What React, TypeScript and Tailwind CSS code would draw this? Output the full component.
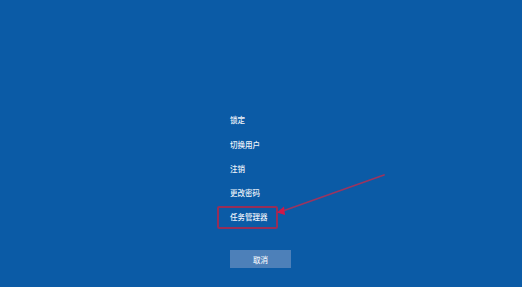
const items = ["锁定", "切换用户", "注销", "更改密码"];

const font = { fontFamily: '"Noto Sans CJK SC", "Noto Sans", sans-serif' };

export default function App() {
    return (
        <div
            className="relative h-[287px] w-[522px] overflow-hidden bg-[#0b5ba6] pl-[230px] pt-[108px] text-[#eef3fa]"
            style={font}
        >
            <div className="flex flex-col">
                {items.map((label) => (
                    <div key={label} className="flex h-[24.25px] items-center text-[7.5px] font-medium leading-none">
                        {label}
                    </div>
                ))}
                {/* highlighted entry */}
                <div className="relative flex h-[24.25px] items-center text-[7.5px] font-medium leading-none">
                    任务管理器
                    <div className="absolute -left-[13px] top-[1px] h-[23px] w-[61px] rounded-[2px] border-2 border-[#962e58]" />
                </div>
            </div>

            <button className="mt-[21px] flex h-[18px] w-[61px] items-center justify-center bg-[#4d80b9] text-[7.5px] font-medium leading-none text-[#eef3fa]">
                取消
            </button>

            {/* annotation arrow */}
            <svg className="absolute left-0 top-0" width="522" height="287" viewBox="0 0 522 287">
                <line x1="384" y1="175" x2="280" y2="212" stroke="#9a3560" strokeWidth="1.8" strokeLinecap="round" />
                <path d="M277 212.5 L284 206.5 L285 215 Z" fill="#d01848" />
            </svg>
        </div>
    );
}
